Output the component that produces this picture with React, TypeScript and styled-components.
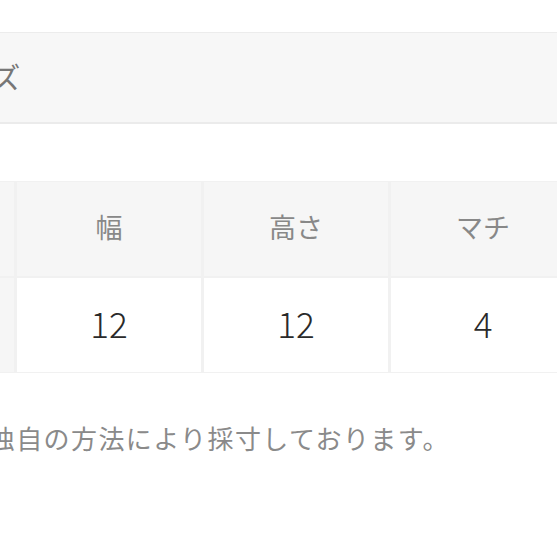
import React from "react";
import styled, { createGlobalStyle } from "styled-components";

const Global = createGlobalStyle`
  html, body { margin: 0; padding: 0; background: #fff; overflow: hidden; }
  body { font-family: "Noto Sans CJK JP", "Noto Sans", sans-serif; }
`;

const Page = styled.div`
  width: 700px;
  margin-left: -100px;
  padding-top: 32px;
  display: flex;
  flex-direction: column;
`;

const TitleBar = styled.div`
  box-sizing: border-box;
  height: 92px;
  background: #f7f7f7;
  border-top: 1px solid #ececec;
  border-bottom: 2px solid #ebebeb;
  display: flex;
  align-items: center;
  padding-left: 34px;
  padding-bottom: 3px;
  font-size: 29px;
  font-weight: 400;
  color: #777;
`;

const Table = styled.div`
  margin-top: 57px;
  margin-left: 20px;
  display: grid;
  grid-template-columns: 94px repeat(3, 184px);
  grid-auto-rows: 94px;
  gap: 2px 3px;
  padding: 1px 0;
  background: #f1f1f1;
  width: max-content;
`;

const Cell = styled.div<{ $head?: boolean }>`
  display: flex;
  align-items: center;
  justify-content: center;
  background: ${(p) => (p.$head ? "#f6f6f6" : "#fff")};
  color: ${(p) => (p.$head ? "#888" : "#2a2a2a")};
  font-size: ${(p) => (p.$head ? "27px" : "35px")};
  font-weight: ${(p) => (p.$head ? 400 : 300)};
  padding-bottom: ${(p) => (p.$head ? "6px" : "6px")};
`;

const Label = styled(Cell)`
  background: #f6f6f6;
  color: #888;
  font-size: 22px;
`;

const Caption = styled.p`
  margin: 46px 0 0;
  padding-left: 34px;
  font-size: 26px;
  letter-spacing: 1.4px;
  font-weight: 400;
  color: #8a8a8a;
  white-space: nowrap;
`;

const heads = ["幅", "高さ", "マチ"];
const values = ["12", "12", "4"];

export default function App() {
  return (
    <>
      <Global />
      <Page>
        <TitleBar>サイズ</TitleBar>
        <Table>
          <Label>cm</Label>
          {heads.map((h) => (
            <Cell $head key={h}>{h}</Cell>
          ))}
          <Label>　</Label>
          {values.map((v, i) => (
            <Cell key={i}>{v}</Cell>
          ))}
        </Table>
        <Caption>当店独自の方法により採寸しております。</Caption>
      </Page>
    </>
  );
}
